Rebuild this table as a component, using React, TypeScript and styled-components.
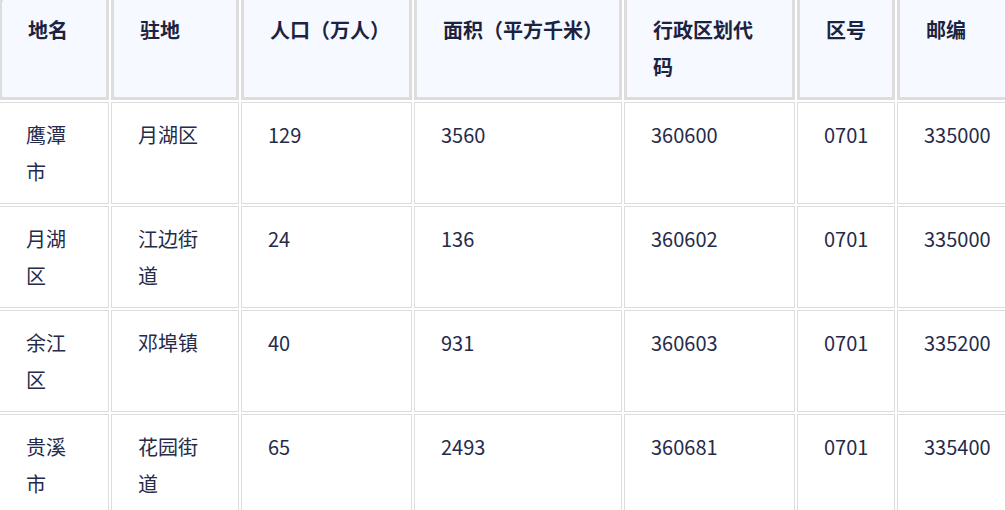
import React from "react";
import styled, { createGlobalStyle } from "styled-components";

const GlobalStyle = createGlobalStyle`
  html, body {
    margin: 0;
    padding: 0;
    background: #ffffff;
    overflow: hidden;
  }
  body {
    font-family: "Noto Sans CJK SC", "Noto Sans", sans-serif;
  }
`;

const Viewport = styled.div`
  width: 1005px;
  height: 510px;
  overflow: hidden;
`;

const Table = styled.table`
  table-layout: fixed;
  width: 1023px;
  border-collapse: separate;
  border-spacing: 2px;
  margin: -8px 0 0 -3px;
  font-family: "Noto Sans CJK SC", "Noto Sans", sans-serif;
  font-size: 20px;
  line-height: 37px;
`;

const HeadCell = styled.th<{ $w: number }>`
  box-sizing: border-box;
  width: ${(p) => p.$w}px;
  padding: 14px 26px 12px;
  border: 3px solid #dddddd;
  background: #f6f9ff;
  color: #1c2340;
  font-weight: 600;
  text-align: left;
  vertical-align: top;
  &:first-child {
    border-top-left-radius: 10px;
  }
`;

const Cell = styled.td`
  box-sizing: border-box;
  padding: 13px 26px;
  border: 1px solid #dddddd;
  background: #ffffff;
  color: #262b4a;
  font-weight: 400;
  text-align: left;
  vertical-align: top;
`;

const columns: { label: string; w: number }[] = [
  { label: "地名", w: 110 },
  { label: "驻地", w: 128 },
  { label: "人口（万人）", w: 171 },
  { label: "面积（平方千米）", w: 208 },
  { label: "行政区划代码", w: 171 },
  { label: "区号", w: 98 },
  { label: "邮编", w: 121 },
];

const rows: string[][] = [
  ["鹰潭市", "月湖区", "129", "3560", "360600", "0701", "335000"],
  ["月湖区", "江边街道", "24", "136", "360602", "0701", "335000"],
  ["余江区", "邓埠镇", "40", "931", "360603", "0701", "335200"],
  ["贵溪市", "花园街道", "65", "2493", "360681", "0701", "335400"],
];

export default function App() {
  return (
    <>
      <GlobalStyle />
      <Viewport>
        <Table>
          <thead>
            <tr>
              {columns.map((c) => (
                <HeadCell key={c.label} $w={c.w}>
                  {c.label}
                </HeadCell>
              ))}
            </tr>
          </thead>
          <tbody>
            {rows.map((r) => (
              <tr key={r[0]}>
                {r.map((v, i) => (
                  <Cell key={i}>{v}</Cell>
                ))}
              </tr>
            ))}
          </tbody>
        </Table>
      </Viewport>
    </>
  );
}
